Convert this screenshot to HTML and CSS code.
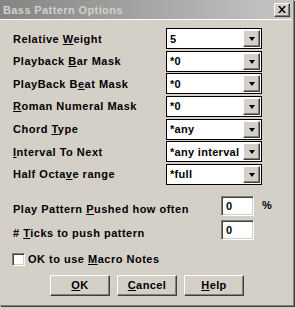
FILE: index.html
```html
<!DOCTYPE html>
<html>
<head>
<meta charset="utf-8">
<link rel="stylesheet" href="styles.css">
</head>
<body>
<div class="window">
  <div class="titlebar">
    <span class="title">Bass Pattern Options</span>
    <span class="close">
      <svg width="8" height="7" viewBox="0 0 8 7"><path d="M0 0h2l2 2.5L6 0h2L5 3.5 8 7H6L4 4.5 2 7H0l3-3.5z" fill="#000"/></svg>
    </span>
  </div>
  <div class="content">
    <div class="grid">
      <span class="label">Relative <u>W</u>eight</span>
      <div class="combo"><span class="val">5</span><span class="drop"><i></i></span></div>
      <span class="label">Playback <u>B</u>ar Mask</span>
      <div class="combo"><span class="val">*0</span><span class="drop"><i></i></span></div>
      <span class="label">PlayBack B<u>e</u>at Mask</span>
      <div class="combo"><span class="val">*0</span><span class="drop"><i></i></span></div>
      <span class="label"><u>R</u>oman Numeral Mask</span>
      <div class="combo"><span class="val">*0</span><span class="drop"><i></i></span></div>
      <span class="label">Chord <u>T</u>ype</span>
      <div class="combo"><span class="val">*any</span><span class="drop"><i></i></span></div>
      <span class="label"><u>I</u>nterval To Next</span>
      <div class="combo"><span class="val">*any interval</span><span class="drop"><i></i></span></div>
      <span class="label">Half Octa<u>v</u>e range</span>
      <div class="combo"><span class="val">*full</span><span class="drop"><i></i></span></div>
    </div>
    <div class="edits">
      <div class="erow">
        <span class="label">Play Pattern <u>P</u>ushed how often</span>
        <span class="edit">0</span>
        <span class="pct">%</span>
      </div>
      <div class="erow">
        <span class="label"># <u>T</u>icks to push pattern</span>
        <span class="edit">0</span>
      </div>
    </div>
    <div class="check">
      <span class="box"></span>
      <span class="label">OK to use <u>M</u>acro Notes</span>
    </div>
    <div class="buttons">
      <span class="btn"><u>O</u>K</span>
      <span class="btn"><u>C</u>ancel</span>
      <span class="btn"><u>H</u>elp</span>
    </div>
  </div>
</div>
</body>
</html>
```
FILE: styles.css
```css
* { box-sizing: border-box; }
html, body { margin: 0; padding: 0; }
body {
  width: 295px;
  height: 309px;
  background: #d4d0c8;
  font-family: "Liberation Sans", Arial, sans-serif;
  font-size: 11px;
  font-weight: bold;
  color: #000;
  overflow: hidden;
}
u { text-decoration: underline; text-underline-offset: 1px; }
.window {
  border-right: 1px solid #808080;
  border-bottom: 1px solid #808080;
  box-shadow: 1px 1px 0 #404040;
  width: 294px;
  height: 306px;
}
.titlebar {
  height: 20px;
  margin-right: 1px;
  background: linear-gradient(to right, #848484, #c6c6c6);
  display: flex;
  align-items: center;
  justify-content: space-between;
  padding: 0 2px 0 3px;
  border-bottom: 1px solid #fff;
}
.title {
  color: #d4d0c8;
  font-size: 11px;
  letter-spacing: 0.4px;
}
.close {
  width: 16px;
  height: 14px;
  background: #d4d0c8;
  border-top: 1px solid #fff;
  border-left: 1px solid #fff;
  border-right: 1px solid #404040;
  border-bottom: 1px solid #404040;
  box-shadow: inset -1px -1px 0 #808080;
  display: flex;
  align-items: center;
  justify-content: center;
  padding-bottom: 1px;
}
.content {
  padding: 8px 0 0 13px;
}
.label { white-space: nowrap; letter-spacing: 0.5px; }
.grid {
  display: grid;
  grid-template-columns: 153px 96px;
  row-gap: 1.67px;
  align-items: center;
}
.combo {
  height: 21px;
  background: #fff;
  border: 1px solid #000;
  display: flex;
  align-items: center;
  justify-content: space-between;
  padding: 0 1px 0 3px;
}
.val { letter-spacing: 0.3px; white-space: nowrap; }
.drop {
  width: 17px;
  height: 17px;
  background: #d4d0c8;
  border-top: 1px solid #fff;
  border-left: 1px solid #fff;
  border-right: 1px solid #404040;
  border-bottom: 1px solid #404040;
  box-shadow: inset -1px -1px 0 #808080;
  display: flex;
  align-items: center;
  justify-content: center;
  flex: none;
}
.drop i {
  width: 0;
  height: 0;
  border-left: 3.5px solid transparent;
  border-right: 3.5px solid transparent;
  border-top: 4px solid #000;
  margin-top: 1px;
}
.edits {
  margin-top: 11px;
  display: flex;
  flex-direction: column;
  gap: 4px;
}
.erow {
  display: grid;
  grid-template-columns: 208px 33px auto;
  align-items: center;
  height: 20px;
}
.erow .label { margin-top: 6px; }
.edit {
  height: 20px;
  background: #fff;
  border-top: 1px solid #808080;
  border-left: 1px solid #808080;
  border-right: 1px solid #fff;
  border-bottom: 1px solid #fff;
  box-shadow: inset 1px 1px 0 #404040, inset -1px -1px 0 #d4d0c8;
  padding: 1px 0 0 4px;
  line-height: 16px;
}
.pct { padding-left: 8px; margin-top: -1px; }
.check {
  margin-top: 13px;
  display: flex;
  align-items: center;
  gap: 3px;
  margin-left: -1px;
}
.box {
  width: 13px;
  height: 13px;
  background: #fff;
  border-top: 1px solid #808080;
  border-left: 1px solid #808080;
  border-right: 1px solid #fff;
  border-bottom: 1px solid #fff;
  box-shadow: inset 1px 1px 0 #404040, inset -1px -1px 0 #d4d0c8;
}
.buttons {
  margin-top: 9px;
  margin-left: 37px;
  display: flex;
  gap: 7px;
}
.btn {
  width: 60px;
  height: 21px;
  background: #d4d0c8;
  border-top: 1px solid #fff;
  border-left: 1px solid #fff;
  border-right: 1px solid #404040;
  border-bottom: 1px solid #404040;
  box-shadow: inset -1px -1px 0 #808080;
  display: flex;
  align-items: center;
  justify-content: center;
  letter-spacing: 0.4px;
}
```
